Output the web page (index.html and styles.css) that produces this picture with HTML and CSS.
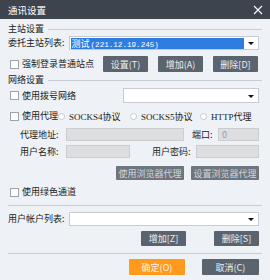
FILE: index.html
```html
<!doctype html>
<html lang="zh">
  <head>
    <meta charset="UTF-8" />
    <title>通讯设置</title>
    <link rel="stylesheet" href="styles.css">
  </head>
  <body>
    <div class="dialog">
      <div class="titlebar">
        <span>通讯设置</span>
        <svg class="close" width="10" height="10" viewBox="0 0 10 10">
          <path d="M1 1 L9 9 M9 1 L1 9" stroke="#fff" stroke-width="1.1" />
        </svg>
      </div>

      <div class="content">
        <div class="group-title"><span>主站设置</span><i></i></div>

        <div class="row r-station">
          <span class="label">委托主站列表:</span>
          <div class="select grow">
            <span class="picked">测试<span class="num">(221.12.19.245)</span></span>
            <b class="arrow"></b>
          </div>
        </div>

        <div class="row r-force">
          <span class="check"></span>
          <span class="label">强制登录普通站点</span>
          <div class="btns">
            <button class="btn">设置(T)</button>
            <button class="btn">增加(A)</button>
            <button class="btn">删除[D]</button>
          </div>
        </div>

        <div class="group-title second"><span>网络设置</span><i></i></div>

        <div class="row r-dial">
          <span class="check"></span>
          <span class="label">使用拨号网络</span>
          <div class="select dial-select"><b class="arrow"></b></div>
        </div>

        <div class="row r-proxy">
          <span class="check"></span>
          <span class="label proxy-label">使用代理</span>
          <span class="radio w72"><i></i>SOCKS4协议</span>
          <span class="radio w70"><i></i>SOCKS5协议</span>
          <span class="radio"><i></i>HTTP代理</span>
        </div>

        <div class="row r-addr">
          <span class="label sub">代理地址:</span>
          <span class="field addr"></span>
          <span class="label port-label">端口:</span>
          <span class="field port">0</span>
        </div>

        <div class="row r-user">
          <span class="label sub">用户名称:</span>
          <span class="field user"></span>
          <span class="label pass-label">用户密码:</span>
          <span class="field pass"></span>
        </div>

        <div class="row r-browser">
          <button class="btn dim">使用浏览器代理</button>
          <button class="btn dim">设置浏览器代理</button>
        </div>

        <div class="row r-green">
          <span class="check"></span>
          <span class="label">使用绿色通道</span>
        </div>

        <div class="line first-line"></div>

        <div class="row r-account">
          <span class="label">用户帐户列表:</span>
          <div class="select grow"><b class="arrow"></b></div>
        </div>

        <div class="row r-acc-btns">
          <button class="btn">增加[Z]</button>
          <button class="btn">删除[S]</button>
        </div>

        <div class="line second-line"></div>

        <div class="row r-ok">
          <button class="btn ok">确定(O)</button>
          <button class="btn cancel">取消(C)</button>
        </div>
      </div>
    </div>
  </body>
</html>
```

FILE: styles.css
```css
body {
  margin: 0;
  font-family: "Noto Sans CJK SC", "DejaVu Sans", sans-serif;
  font-size: 9px;
  color: #222;
}
.dialog {
  width: 270px;
  height: 280px;
  background: #eef1f5;
  overflow: hidden;
}
.titlebar {
  height: 19px;
  background: #3d444e;
  color: #fff;
  display: flex;
  align-items: center;
  justify-content: space-between;
  padding: 0 8px;
  font-size: 9.5px;
}
.close {
  margin-right: -1px;
}
.content {
  padding: 0 11px 0 8px;
  display: flex;
  flex-direction: column;
}
.group-title {
  height: 12px;
  margin-top: 4px;
  margin-right: -3px;
  display: flex;
  align-items: center;
  line-height: 12px;
}
.group-title i {
  flex: 1;
  height: 1px;
  background: #c9cdd3;
  margin-left: 4px;
}
.group-title.second {
  margin-top: 2px;
}
.row {
  display: flex;
  align-items: center;
}
.label {
  white-space: nowrap;
  line-height: 12px;
}
.grow {
  flex: 1;
}
.select {
  position: relative;
  box-sizing: border-box;
  height: 100%;
  background: #fff;
  border: 1px solid #c6cbd1;
  display: flex;
  align-items: center;
}
.arrow {
  position: absolute;
  right: 4px;
  top: 50%;
  margin-top: -1px;
  border-left: 3px solid transparent;
  border-right: 3px solid transparent;
  border-top: 3px solid #111;
}
.picked {
  background: #2f7de1;
  color: #fff;
  height: 11px;
  line-height: 11px;
  margin-left: 1px;
  width: 172px;
  padding-left: 1px;
  white-space: nowrap;
}
.num {
  font-family: "Liberation Mono", monospace;
  font-size: 7.6px;
  margin-left: 1px;
}
.r-station {
  height: 14px;
  margin-top: 1px;
}
.r-station .select,
.r-account .select {
  margin-left: 4px;
}
.check {
  box-sizing: border-box;
  width: 9px;
  height: 9px;
  background: #fff;
  border: 1px solid #9ea4ab;
  margin: 0 3px 0 2px;
  flex: none;
}
.btn {
  box-sizing: border-box;
  border: none;
  margin: 0;
  padding: 0;
  background: #5b646e;
  color: #eceef0;
  font-family: "Noto Sans CJK SC", "Liberation Serif", serif;
  font-size: 9px;
  border-radius: 1px;
  height: 100%;
  white-space: nowrap;
}
.r-force {
  height: 16px;
  margin-top: 6px;
}
.r-force .btns {
  margin-left: auto;
  display: flex;
  gap: 10px;
  height: 100%;
  margin-right: 1px;
}
.r-force .btn {
  width: 45px;
}
.r-dial {
  height: 15px;
  margin-top: 2px;
}
.dial-select {
  margin-left: auto;
  width: 136px;
}
.r-proxy {
  height: 14px;
  margin-top: 6px;
}
.proxy-label {
  width: 36px;
}
.radio {
  display: flex;
  align-items: center;
  white-space: nowrap;
  font-family: "Liberation Serif", "Noto Sans CJK SC", serif;
}
.radio i {
  box-sizing: border-box;
  width: 7px;
  height: 7px;
  border-radius: 50%;
  border: 1px solid #c4c9cf;
  background: #fff;
  margin-right: 4px;
}
.w72 {
  width: 72px;
}
.w70 {
  width: 70px;
}
.sub {
  margin-left: 12px;
  width: 46px;
}
.field {
  box-sizing: border-box;
  height: 100%;
  background: #dcdee0;
  border: 1px solid #cbcdd0;
  color: #9a9ea3;
  padding-left: 3px;
  line-height: 11px;
}
.r-addr {
  height: 13px;
  margin-top: 5px;
}
.addr {
  width: 118px;
}
.port-label {
  margin-left: 8px;
  width: 26px;
}
.port {
  width: 41px;
}
.r-user {
  height: 13px;
  margin-top: 4px;
}
.user {
  width: 64px;
}
.pass-label {
  margin-left: 22px;
  width: 44px;
}
.pass {
  width: 63px;
}
.r-browser {
  height: 14px;
  margin-top: 8px;
  justify-content: flex-end;
  gap: 7px;
}
.btn.dim {
  width: 68px;
  background: #6d757e;
  color: #d3d6da;
}
.r-green {
  height: 14px;
  margin-top: 5px;
}
.line {
  height: 1px;
  background: #c9cdd3;
  margin-right: -3px;
}
.first-line {
  margin-top: 6px;
}
.r-account {
  height: 14px;
  margin-top: 6px;
}
.r-acc-btns {
  height: 15px;
  margin-top: 5px;
  justify-content: flex-end;
  gap: 28px;
}
.r-acc-btns .btn {
  width: 45px;
}
.second-line {
  margin-top: 7px;
}
.r-ok {
  height: 16px;
  margin-top: 5px;
  justify-content: flex-end;
  gap: 17px;
}
.btn.ok {
  width: 56px;
  background: #ff9a1c;
  color: #fff4e6;
}
.btn.cancel {
  width: 57px;
}
```
